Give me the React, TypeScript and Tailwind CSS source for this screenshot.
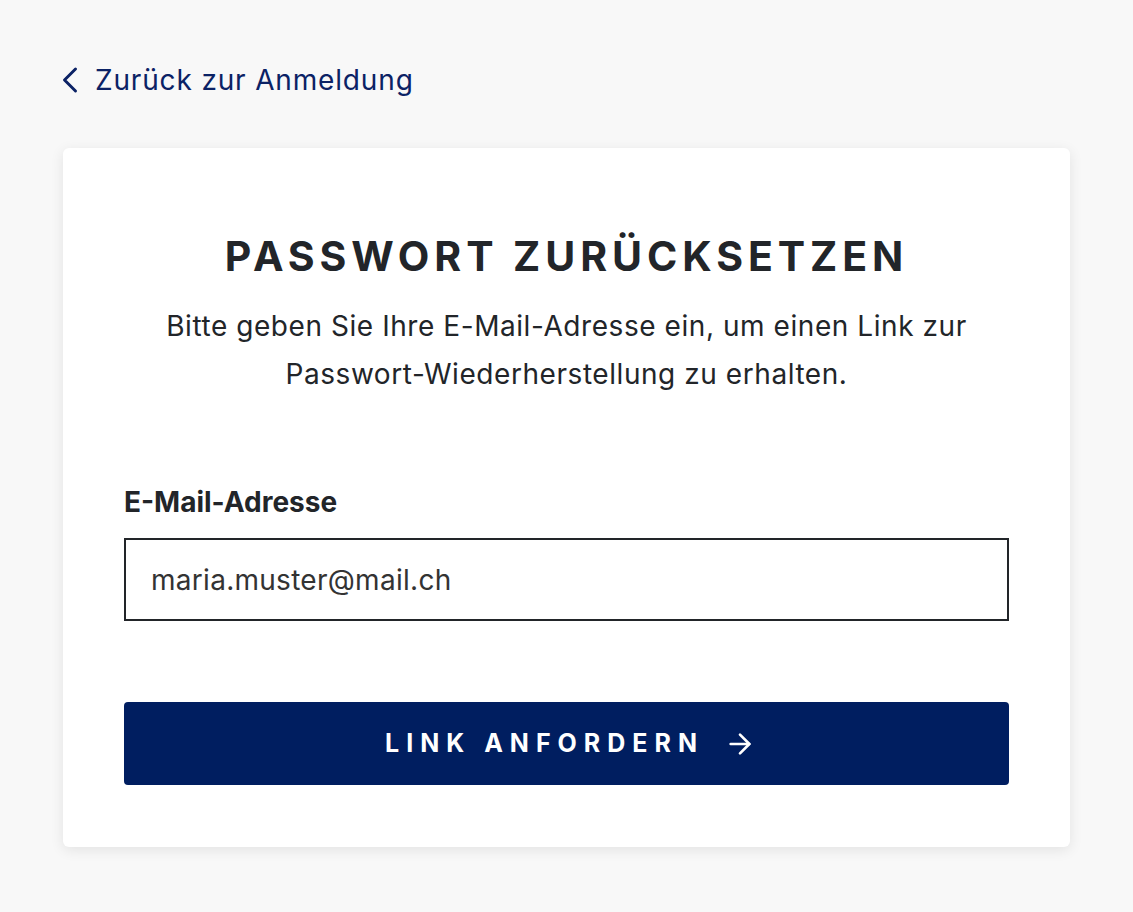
import { ChevronLeft, ArrowRight } from "lucide-react";

export default function App() {
  return (
    <div
      className="min-h-[912px] w-full bg-[#f8f8f8] px-[63px] pt-[58px]"
      style={{ fontFamily: "Inter, 'Noto Sans', sans-serif" }}
    >
      {/* Zurück-Link */}
      <a href="#" className="flex items-center text-[#0b2265]">
        <ChevronLeft className="-ml-[15px] h-[44px] w-[44px]" strokeWidth={1.6} />
        <span className="ml-[3px] text-[28px] leading-[44px] tracking-[0.03em]">Zurück zur Anmeldung</span>
      </a>

      {/* Karte */}
      <div className="mt-[46px] w-[1007px] rounded-[6px] bg-white px-[61px] pb-[62px] pt-[84px] shadow-[0_3px_14px_rgba(0,0,0,0.09)]">
        <h1 className="text-center text-[41px] font-bold leading-[48px] tracking-[0.12em] text-[#222529]">
          PASSWORT ZURÜCKSETZEN
        </h1>
        <p className="mt-[22px] text-center text-[28px] leading-[48px] tracking-[0.02em] text-[#222529]">
          Bitte geben Sie Ihre E-Mail-Adresse ein, um einen Link zur
          <br />
          Passwort-Wiederherstellung zu erhalten.
        </p>

        <label className="mt-[86px] block text-[28px] font-bold leading-[36px] text-[#222529]">
          E-Mail-Adresse
        </label>
        <div className="mt-[18px] flex h-[83px] items-center border-2 border-[#222529] px-[25px]">
          <span className="text-[28px] tracking-[0.01em] text-[#333]">maria.muster@mail.ch</span>
        </div>

        <button className="mt-[81px] flex h-[83px] w-full items-center justify-center gap-[20px] rounded-[4px] bg-[#001e60] pl-[8px] text-white">
          <span className="text-[25px] font-bold tracking-[0.28em]">LINK ANFORDERN</span>
          <ArrowRight className="h-[32px] w-[32px]" strokeWidth={2} />
        </button>
      </div>
    </div>
  );
}
